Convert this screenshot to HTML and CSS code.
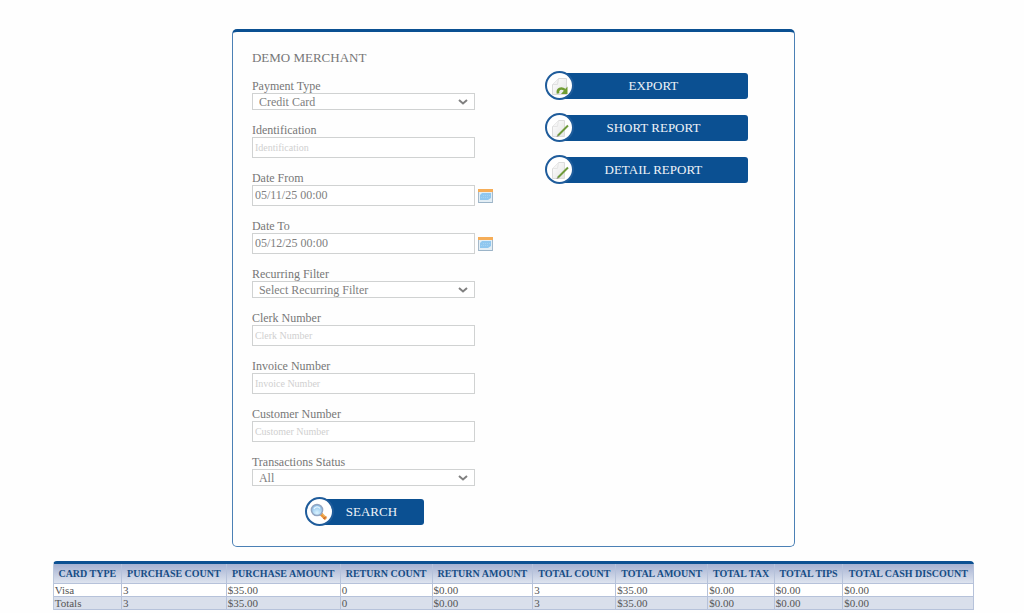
FILE: index.html
```
<!DOCTYPE html>
<html lang="en">
<head>
    <meta charset="UTF-8">
    <meta name="viewport" content="width=device-width, initial-scale=1.0">
    <title>Transaction Report</title>
    <link rel="stylesheet" href="styles.css">
</head>
<body>
    <!-- Shared icon shapes -->
    <svg class="icon-defs" aria-hidden="true">
        <defs>
            <linearGradient id="page-fill" x1="0" y1="0" x2="1" y2="1">
                <stop offset="0" stop-color="#ffffff"/>
                <stop offset="1" stop-color="#e4e4e4"/>
            </linearGradient>
            <radialGradient id="lens-fill" cx="0.5" cy="0.75" r="0.7">
                <stop offset="0" stop-color="#d9f3ff"/>
                <stop offset="1" stop-color="#86bce8"/>
            </radialGradient>
        </defs>
        <symbol id="chevron" viewBox="0 0 10 6">
            <path d="M1 1l4 3.5L9 1" fill="none" stroke="#808080" stroke-width="2"/>
        </symbol>
        <symbol id="calendar" viewBox="0 0 15 14">
            <rect x="0.5" y="0.5" width="14" height="13" fill="#e3eef5" stroke="#a5b9ca"/>
            <rect x="0" y="0" width="15" height="3" fill="#f5ad58"/>
            <path d="M4 4h9v5l-3 2H2V6z" fill="#8fc7ef"/>
            <path d="M5 6.500h7M3 8.500h8" stroke="#a4d2f2" stroke-dasharray="1 1"/>
            <path d="M1 13.500h13" stroke="#9bb4c8"/>
        </symbol>
        <symbol id="page-arrow" viewBox="0 0 20 20">
            <path d="M3.500 8.500L9.500 2.500H17.500V18.500H3.500z" fill="url(#page-fill)" stroke="#dadada"/>
            <path d="M3.500 8.500L8.500 8.500L9.500 2.500" fill="#f3f3f3" stroke="#e0e0e0"/>
            <path d="M9 17.500C8 13 12 11 16 14" fill="none" stroke="#709c32" stroke-width="2.600"/>
            <path d="M18.500 10.500V18H12z" fill="#709c32"/>
        </symbol>
        <symbol id="page-pencil" viewBox="0 0 20 20">
            <path d="M3.500 8.500L9.500 2.500H15.500V18.500H3.500z" fill="url(#page-fill)" stroke="#dcdcdc"/>
            <path d="M3.500 8.500L8.500 8.500L9.500 2.500" fill="#f5f5f5" stroke="#e6e6e6"/>
            <path d="M9 17.500L19 7.500" stroke="#6f9a3c" stroke-width="2"/>
            <path d="M7.500 19l.8-2.200 1.400 1.400z" fill="#8a8a7a"/>
        </symbol>
        <symbol id="magnifier" viewBox="0 0 18 18">
            <path d="M10.500 10.500l5.500 5.500" stroke="#e8953a" stroke-width="3.400"/>
            <path d="M12.500 11l4 4" stroke="#f8cf7c" stroke-width="1"/>
            <path d="M13.500 16l2.500-2.500" stroke="#b94b28" stroke-width="1"/>
            <circle cx="7" cy="7" r="5.600" fill="url(#lens-fill)" stroke="#93a5c1" stroke-width="1.500"/>
            <path d="M4 6c1-2.500 4.500-3 6-.5" fill="none" stroke="#e8f6ff" stroke-width="1.200"/>
        </symbol>
    </svg>

    <div class="panel">
        <form class="filters">
            <h1>DEMO MERCHANT</h1>

            <div class="field">
                <label for="payment-type">Payment Type</label>
                <div class="select-box">
                    <select id="payment-type">
                        <option>Credit Card</option>
                    </select>
                    <svg class="chevron"><use href="#chevron"/></svg>
                </div>
            </div>

            <div class="field">
                <label for="identification">Identification</label>
                <input type="text" id="identification" placeholder="Identification">
            </div>

            <div class="field">
                <label for="date-from">Date From</label>
                <div class="date-row">
                    <input type="text" id="date-from" value="05/11/25 00:00">
                    <button type="button" class="calendar-btn" aria-label="Choose start date">
                        <svg><use href="#calendar"/></svg>
                    </button>
                </div>
            </div>

            <div class="field">
                <label for="date-to">Date To</label>
                <div class="date-row">
                    <input type="text" id="date-to" value="05/12/25 00:00">
                    <button type="button" class="calendar-btn" aria-label="Choose end date">
                        <svg><use href="#calendar"/></svg>
                    </button>
                </div>
            </div>

            <div class="field">
                <label for="recurring-filter">Recurring Filter</label>
                <div class="select-box">
                    <select id="recurring-filter">
                        <option>Select Recurring Filter</option>
                    </select>
                    <svg class="chevron"><use href="#chevron"/></svg>
                </div>
            </div>

            <div class="field">
                <label for="clerk-number">Clerk Number</label>
                <input type="text" id="clerk-number" placeholder="Clerk Number">
            </div>

            <div class="field">
                <label for="invoice-number">Invoice Number</label>
                <input type="text" id="invoice-number" placeholder="Invoice Number">
            </div>

            <div class="field">
                <label for="customer-number">Customer Number</label>
                <input type="text" id="customer-number" placeholder="Customer Number">
            </div>

            <div class="field">
                <label for="transactions-status">Transactions Status</label>
                <div class="select-box">
                    <select id="transactions-status">
                        <option>All</option>
                    </select>
                    <svg class="chevron"><use href="#chevron"/></svg>
                </div>
            </div>

            <button type="submit" class="action-btn search-btn">
                <span class="action-icon"><svg><use href="#magnifier"/></svg></span>
                <span class="action-label">SEARCH</span>
            </button>
        </form>

        <div class="reports">
            <button type="button" class="action-btn">
                <span class="action-icon page-icon"><svg><use href="#page-arrow"/></svg></span>
                <span class="action-label">EXPORT</span>
            </button>
            <button type="button" class="action-btn">
                <span class="action-icon page-icon"><svg><use href="#page-pencil"/></svg></span>
                <span class="action-label">SHORT REPORT</span>
            </button>
            <button type="button" class="action-btn">
                <span class="action-icon page-icon"><svg><use href="#page-pencil"/></svg></span>
                <span class="action-label">DETAIL REPORT</span>
            </button>
        </div>
    </div>

    <table class="totals">
        <thead>
            <tr>
                <th>CARD TYPE</th>
                <th>PURCHASE COUNT</th>
                <th>PURCHASE AMOUNT</th>
                <th>RETURN COUNT</th>
                <th>RETURN AMOUNT</th>
                <th>TOTAL COUNT</th>
                <th>TOTAL AMOUNT</th>
                <th>TOTAL TAX</th>
                <th>TOTAL TIPS</th>
                <th>TOTAL CASH DISCOUNT</th>
            </tr>
        </thead>
        <tbody>
            <tr>
                <td>Visa</td>
                <td>3</td>
                <td>$35.00</td>
                <td>0</td>
                <td>$0.00</td>
                <td>3</td>
                <td>$35.00</td>
                <td>$0.00</td>
                <td>$0.00</td>
                <td>$0.00</td>
            </tr>
            <tr class="totals-row">
                <td>Totals</td>
                <td>3</td>
                <td>$35.00</td>
                <td>0</td>
                <td>$0.00</td>
                <td>3</td>
                <td>$35.00</td>
                <td>$0.00</td>
                <td>$0.00</td>
                <td>$0.00</td>
            </tr>
        </tbody>
    </table>
</body>
</html>
```
FILE: styles.css
```
* {
    box-sizing: border-box;
}

body {
    margin: 0;
    padding: 29px 0 0 3px;
    background-color: #fefefe;
    color: #777;
    font-family: "Liberation Serif", "Times New Roman", serif;
    font-size: 12px;
}

.icon-defs {
    display: block;
    width: 0;
    height: 0;
}

.panel {
    display: grid;
    grid-template-columns: 56% 44%;
    width: 55vw;
    margin: 0 auto 14px;
    padding: 19px 19px 20px;
    border: 1px solid #4b80b5;
    border-top: 3px solid #0b5092;
    border-radius: 5px;
}

h1 {
    margin: 0 0 14px;
    font-size: 13px;
    font-weight: normal;
    line-height: 14px;
}

.field {
    margin-bottom: 13px;
}

.field:nth-last-of-type(1) {
    margin-bottom: 11px;
}

label {
    display: block;
    font-size: 12px;
    line-height: 14px;
}

input,
select {
    display: block;
    width: 223px;
    border: 1px solid #d0d2d2;
    border-radius: 0;
    background-color: #fff;
    color: #808080;
    font-family: inherit;
    font-size: 12px;
}

input {
    height: 21px;
    padding: 0 2px;
}

input::placeholder {
    color: #d0d0d0;
    font-size: 10px;
    opacity: 1;
}

.select-box {
    position: relative;
    width: 223px;
}

select {
    height: 17px;
    padding: 0 6px;
    appearance: none;
}

.chevron {
    position: absolute;
    top: 6px;
    right: 7px;
    width: 10px;
    height: 6px;
    pointer-events: none;
}

.date-row {
    display: flex;
    align-items: center;
    gap: 3px;
}

.calendar-btn {
    padding: 0;
    border: none;
    background: none;
    cursor: pointer;
}

.calendar-btn svg {
    display: block;
    width: 15px;
    height: 14px;
}

.action-btn {
    display: flex;
    align-items: center;
    width: 203px;
    height: 29px;
    padding: 0;
    border: none;
    background: none;
    color: #eef3f8;
    font-family: inherit;
    font-size: 13px;
    cursor: pointer;
}

.action-icon {
    z-index: 1;
    display: flex;
    align-items: center;
    justify-content: center;
    flex: none;
    width: 29px;
    height: 29px;
    margin-right: -15px;
    border: 2px solid #1f5c9b;
    border-radius: 50%;
    background-color: #fff;
}

.action-icon svg {
    width: 18px;
    height: 18px;
}

.page-icon svg {
    width: 20px;
    height: 20px;
}

.action-label {
    flex: 1;
    border-radius: 3px;
    background-color: #0b5092;
    line-height: 26px;
    text-align: center;
}

.search-btn {
    width: 119px;
    margin-left: 53px;
}

.reports {
    display: flex;
    flex-direction: column;
    gap: 13px;
    padding-top: 20px;
}

.totals {
    width: 90vw;
    margin: 0 auto;
    border-spacing: 0;
    border-top: 3px solid #0b5092;
    border-left: 1px solid #bcc8dc;
    border-radius: 4px 4px 0 0;
    font-size: 11px;
}

.totals th,
.totals td {
    border-right: 1px solid #b6c2da;
    border-bottom: 1px solid #b6c2da;
    white-space: nowrap;
}

.totals th {
    height: 20px;
    padding: 0 4px;
    background: linear-gradient(#a5b1d2, #dee4ef);
    color: #164d85;
    font-size: 10px;
    line-height: 19px;
}

.totals td {
    padding: 0 1px;
    background-color: #fff;
    color: #555;
    line-height: 12px;
}

.totals .totals-row td {
    background-color: #d9dfeb;
}
```
